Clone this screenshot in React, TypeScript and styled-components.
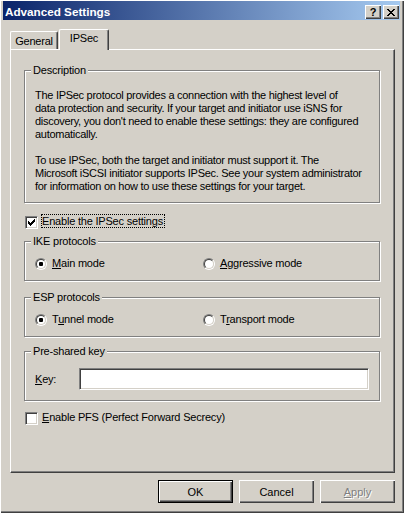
import React from "react";
import styled, { createGlobalStyle } from "styled-components";

const GlobalStyle = createGlobalStyle`
  html, body {
    margin: 0;
    padding: 0;
    background: #d4d0c8;
  }
  body {
    font-family: "Liberation Sans", Arial, sans-serif;
    font-size: 11px;
    letter-spacing: -0.2px;
    color: #000;
  }
`;

const CHECK = ["......#", ".....##", "#...###", "##.###.", "#####..", ".###...", "..#...."];
const CROSS = ["##....##", ".##..##.", "..####..", "...##...", "..####..", ".##..##.", "##....##"];

const pixels = (rows: string[]) =>
  rows
    .flatMap((row, y) => row.split("").map((c, x) => (c === "#" ? `M${x} ${y}h1v1h-1z` : "")))
    .join("");

const PixelIcon: React.FC<{ rows: string[] }> = ({ rows }) => (
  <svg
    width={rows[0].length}
    height={rows.length}
    viewBox={`0 0 ${rows[0].length} ${rows.length}`}
    shapeRendering="crispEdges"
  >
    <path d={pixels(rows)} fill="#000" />
  </svg>
);

const Window = styled.div`
  box-sizing: border-box;
  width: 404px;
  height: 513px;
  padding: 1px 4px 0 3px;
  background: #d4d0c8;
  box-shadow: inset 1px 1px 0 #fff, inset -1px -1px 0 #404040, inset -2px -2px 0 #808080;
  display: flex;
  flex-direction: column;
`;

const TitleBar = styled.div`
  height: 19px;
  display: flex;
  align-items: flex-start;
  padding: 0 1px 0 2px;
  background: linear-gradient(to right, #0a246a, #a6caf0);
`;

const Title = styled.span`
  flex: 1;
  margin-top: 4px;
  line-height: 13px;
  font-size: 11.7px;
  font-weight: bold;
  letter-spacing: 0;
  color: #fff;
  white-space: nowrap;
`;

const CaptionButton = styled.span<{ $gap?: number }>`
  box-sizing: border-box;
  width: 16px;
  height: 14px;
  margin: 4px 0 0 ${(p) => p.$gap ?? 0}px;
  display: flex;
  align-items: center;
  justify-content: center;
  background: #d4d0c8;
  box-shadow: inset 1px 1px 0 #fff, inset -1px -1px 0 #404040, inset -2px -2px 0 #808080;
  font-weight: bold;
  font-size: 11px;
  line-height: 12px;
`;

const Body = styled.div`
  padding: 9px 5px 0 7px;
  display: flex;
  flex-direction: column;
`;

const TabRow = styled.div`
  height: 20px;
  display: flex;
  align-items: flex-end;
`;

const Tab = styled.div<{ $active?: boolean; $width: number }>`
  box-sizing: border-box;
  position: relative;
  z-index: ${(p) => (p.$active ? 1 : 0)};
  width: ${(p) => p.$width}px;
  height: ${(p) => (p.$active ? 21 : 18)}px;
  margin: 0 0 ${(p) => (p.$active ? -1 : 0)}px ${(p) => (p.$active ? 1 : 0)}px;
  padding-top: ${(p) => (p.$active ? 2 : 3)}px;
  display: flex;
  justify-content: center;
  line-height: 13px;
  background: #d4d0c8;
  border-top: 1px solid #fff;
  border-left: 1px solid #fff;
  border-right: 1px solid #404040;
  border-radius: 2px 2px 0 0;
  box-shadow: inset -1px 0 0 #808080;
`;

const Panel = styled.div`
  box-sizing: border-box;
  width: 385px;
  height: 424px;
  padding: 20px 0 0 13px;
  display: flex;
  flex-direction: column;
  align-items: flex-start;
  border-top: 1px solid #fff;
  border-left: 1px solid #fff;
  border-right: 1px solid #404040;
  border-bottom: 1px solid #404040;
  box-shadow: inset -1px -1px 0 #808080;
`;

const Group = styled.div<{ $mt?: number; $pb?: number }>`
  box-sizing: border-box;
  width: 356px;
  margin-top: ${(p) => p.$mt ?? 0}px;
  padding: 0 10px ${(p) => p.$pb ?? 10}px;
  display: flex;
  flex-direction: column;
  border: 1px solid #808080;
  box-shadow: inset 1px 1px 0 #fff, 1px 1px 0 #fff;
`;

const Caption = styled.span`
  align-self: flex-start;
  margin: -7px 0 0 -4px;
  padding: 0 2px;
  line-height: 13px;
  background: #d4d0c8;
`;

const Description = styled.div`
  margin-top: 12px;
  line-height: 13px;
  letter-spacing: -0.28px;
  white-space: nowrap;
`;

const Para = styled.p`
  margin: 0 0 13px;
  &:last-child {
    margin-bottom: 0;
  }
`;

const CheckRow = styled.label<{ $mt: number }>`
  margin: ${(p) => p.$mt}px 0 0 1px;
  display: flex;
  align-items: flex-start;
  gap: 3px;
`;

const CheckBox = styled.span`
  box-sizing: border-box;
  width: 13px;
  height: 13px;
  margin-top: 2px;
  padding: 1px;
  display: flex;
  border: 1px solid;
  border-color: #808080 #fff #fff #808080;
  box-shadow: inset 1px 1px 0 #404040, inset -1px -1px 0 #d4d0c8;
  background: #fff;
`;

const CheckMark = styled.span`
  margin: 1px 0 0 1px;
  display: flex;
`;

const CheckLabel = styled.span<{ $focused?: boolean }>`
  padding-right: 1px;
  line-height: 12px;
  border: 1px dotted ${(p) => (p.$focused ? "#000" : "transparent")};
  white-space: nowrap;
`;

const RadioRow = styled.div`
  margin-top: 9px;
  height: 13px;
  display: grid;
  grid-template-columns: 168px 1fr;
`;

const RadioItem = styled.label`
  display: flex;
  align-items: center;
  gap: 5px;
  line-height: 13px;
  white-space: nowrap;
`;

const RadioOuter = styled.span`
  box-sizing: border-box;
  width: 12px;
  height: 12px;
  display: flex;
  border-radius: 50%;
  border: 1px solid;
  border-color: #808080 #fff #fff #808080;
`;

const RadioInner = styled.span`
  flex: 1;
  display: flex;
  align-items: center;
  justify-content: center;
  border-radius: 50%;
  border: 1px solid;
  border-color: #404040 #d4d0c8 #d4d0c8 #404040;
  background: #fff;
`;

const RadioDot = styled.span`
  width: 4px;
  height: 4px;
  border-radius: 1px;
  background: #000;
`;

const KeyRow = styled.div`
  margin-top: 10px;
  display: flex;
  align-items: center;
`;

const KeyLabel = styled.label`
  width: 44px;
  line-height: 13px;
`;

const TextBox = styled.input`
  box-sizing: border-box;
  width: 291px;
  height: 22px;
  margin: 0;
  padding: 2px 3px;
  font: inherit;
  background: #fff;
  border: 1px solid;
  border-color: #808080 #fff #fff #808080;
  box-shadow: inset 1px 1px 0 #404040, inset -1px -1px 0 #d4d0c8;
  outline: none;
`;

const ButtonRow = styled.div`
  margin-top: 7px;
  display: flex;
  justify-content: flex-end;
  gap: 6px;
`;

const PushButton = styled.button<{ $default?: boolean }>`
  box-sizing: border-box;
  width: 75px;
  height: 23px;
  margin: 0;
  padding: 0;
  font: inherit;
  color: ${(p) => (p.disabled ? "#808080" : "#000")};
  text-shadow: ${(p) => (p.disabled ? "1px 1px 0 #fff" : "none")};
  background: #d4d0c8;
  border: ${(p) => (p.$default ? "1px solid #000" : "none")};
  box-shadow: inset 1px 1px 0 #fff, inset -1px -1px 0 #404040, inset -2px -2px 0 #808080;
`;

const Radio: React.FC<{ checked?: boolean; children: React.ReactNode }> = ({ checked, children }) => (
  <RadioItem>
    <RadioOuter>
      <RadioInner>{checked && <RadioDot />}</RadioInner>
    </RadioOuter>
    <span>{children}</span>
  </RadioItem>
);

const Check: React.FC<{ checked?: boolean; focused?: boolean; mt: number; children: React.ReactNode }> = ({
  checked,
  focused,
  mt,
  children,
}) => (
  <CheckRow $mt={mt}>
    <CheckBox>
      {checked && (
        <CheckMark>
          <PixelIcon rows={CHECK} />
        </CheckMark>
      )}
    </CheckBox>
    <CheckLabel $focused={focused}>{children}</CheckLabel>
  </CheckRow>
);

const App: React.FC = () => (
  <>
    <GlobalStyle />
    <Window>
      <TitleBar>
        <Title>Advanced Settings</Title>
        <CaptionButton>?</CaptionButton>
        <CaptionButton $gap={2}>
          <PixelIcon rows={CROSS} />
        </CaptionButton>
      </TitleBar>
      <Body>
        <TabRow>
          <Tab $width={48}>General</Tab>
          <Tab $width={50} $active>
            IPSec
          </Tab>
        </TabRow>
        <Panel>
          <Group $pb={9}>
            <Caption>Description</Caption>
            <Description>
              <Para>
                The IPSec protocol provides a connection with the highest level of
                <br />
                data protection and security. If your target and initiator use iSNS for
                <br />
                discovery, you don't need to enable these settings: they are configured
                <br />
                automatically.
              </Para>
              <Para>
                To use IPSec, both the target and initiator must support it. The
                <br />
                Microsoft iSCSI initiator supports IPSec. See your system administrator
                <br />
                for information on how to use these settings for your target.
              </Para>
            </Description>
          </Group>

          <Check checked focused mt={11}>
            Enable the IPSec settings
          </Check>

          <Group $mt={12}>
            <Caption>IKE protocols</Caption>
            <RadioRow>
              <Radio checked>
                <u>M</u>ain mode
              </Radio>
              <Radio>
                <u>A</u>ggressive mode
              </Radio>
            </RadioRow>
          </Group>

          <Group $mt={16}>
            <Caption>ESP protocols</Caption>
            <RadioRow>
              <Radio checked>
                T<u>u</u>nnel mode
              </Radio>
              <Radio>
                T<u>r</u>ansport mode
              </Radio>
            </RadioRow>
          </Group>

          <Group $mt={14}>
            <Caption>Pre-shared key</Caption>
            <KeyRow>
              <KeyLabel htmlFor="psk">
                <u>K</u>ey:
              </KeyLabel>
              <TextBox id="psk" type="text" />
            </KeyRow>
          </Group>

          <Check mt={9}>
            <u>E</u>nable PFS (Perfect Forward Secrecy)
          </Check>
        </Panel>
        <ButtonRow>
          <PushButton $default>OK</PushButton>
          <PushButton>Cancel</PushButton>
          <PushButton disabled>
            <u>A</u>pply
          </PushButton>
        </ButtonRow>
      </Body>
    </Window>
  </>
);

export default App;
